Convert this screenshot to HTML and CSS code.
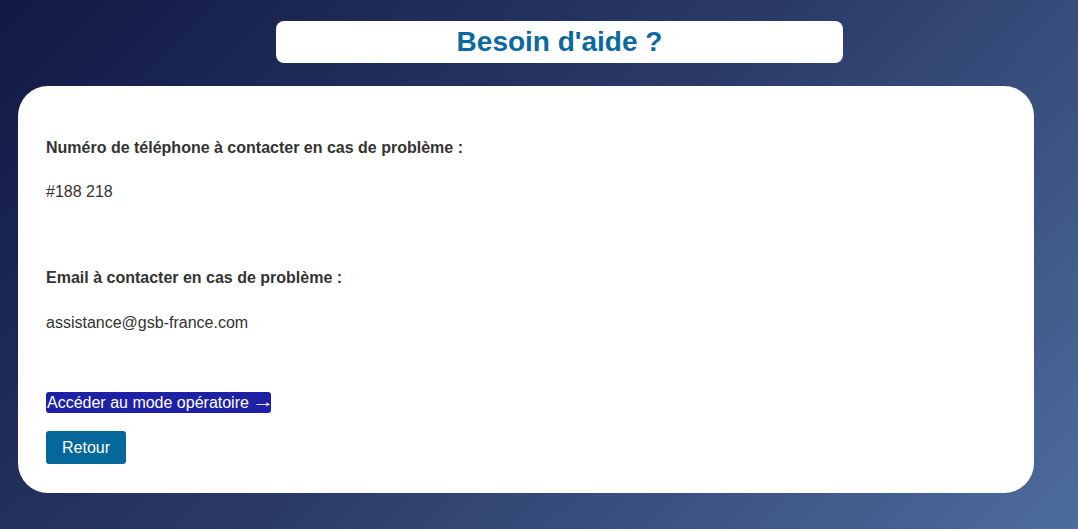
FILE: index.html
```html
<!DOCTYPE html>
<html lang="fr">
<head>
<meta charset="utf-8">
<title>Besoin d'aide ?</title>
<link rel="stylesheet" href="styles.css">
</head>
<body>
<div class="page">
  <header class="title-box">
    <h1 class="title">Besoin d'aide ?</h1>
  </header>
  <main class="card">
    <p class="label">Numéro de téléphone à contacter en cas de problème :</p>
    <p class="value">#188 218</p>
    <p class="label label-second">Email à contacter en cas de problème :</p>
    <p class="value value-second">assistance@gsb-france.com</p>
    <div class="link-row"><a class="mode-link" href="#"><span>Accéder au mode opératoire</span><span class="arrow">→</span></a></div>
    <div class="btn-row"><button class="btn-back" type="button">Retour</button></div>
  </main>
</div>
</body>
</html>
```
FILE: styles.css
```css
html, body {
  margin: 0;
  padding: 0;
}
body {
  min-height: 529px;
  background: linear-gradient(135deg, #121944 0%, #2b3b69 50%, #4d6c9c 100%);
  font-family: "Liberation Sans", Arial, sans-serif;
  color: #333333;
}
.page {
  padding-top: 21px;
  display: flex;
  flex-direction: column;
}
.title-box {
  margin-left: 276px;
  width: 567px;
  height: 42px;
  background: #ffffff;
  border-radius: 8px;
  display: flex;
  align-items: center;
  justify-content: center;
}
.title {
  margin: 0;
  font-size: 28px;
  font-weight: bold;
  line-height: 32px;
  color: #0b699f;
}
.card {
  margin-top: 23px;
  margin-left: 18px;
  width: 1016px;
  box-sizing: border-box;
  background: #ffffff;
  border-radius: 30px;
  padding: 52px 28px 29px 28px;
}
.label, .value {
  margin: 0;
  font-size: 16px;
  line-height: 20px;
}
.label {
  font-weight: bold;
}
.value {
  margin-top: 24px;
}
.value-second {
  margin-top: 25px;
}
.label-second {
  margin-top: 66px;
}
.link-row {
  margin-top: 59px;
  height: 21px;
  display: flex;
}
.mode-link {
  display: flex;
  align-items: center;
  background: #1e20a6;
  color: #ffffff;
  text-decoration: none;
  font-size: 16px;
  line-height: 21px;
  height: 21px;
  padding: 0 1px 0 1px;
  border-radius: 3px;
}
.arrow {
  display: inline-block;
  width: 15px;
  margin-left: 6px;
  text-align: center;
  transform: translateY(-1px) scaleX(1.4);
}
.btn-row {
  margin-top: 18px;
}
.btn-back {
  display: block;
  width: 80px;
  height: 33px;
  border: none;
  border-radius: 3px;
  background: #06689a;
  color: #ffffff;
  font-family: "Liberation Sans", Arial, sans-serif;
  font-size: 16px;
  padding: 1px 0 0 0;
  cursor: pointer;
}
```
